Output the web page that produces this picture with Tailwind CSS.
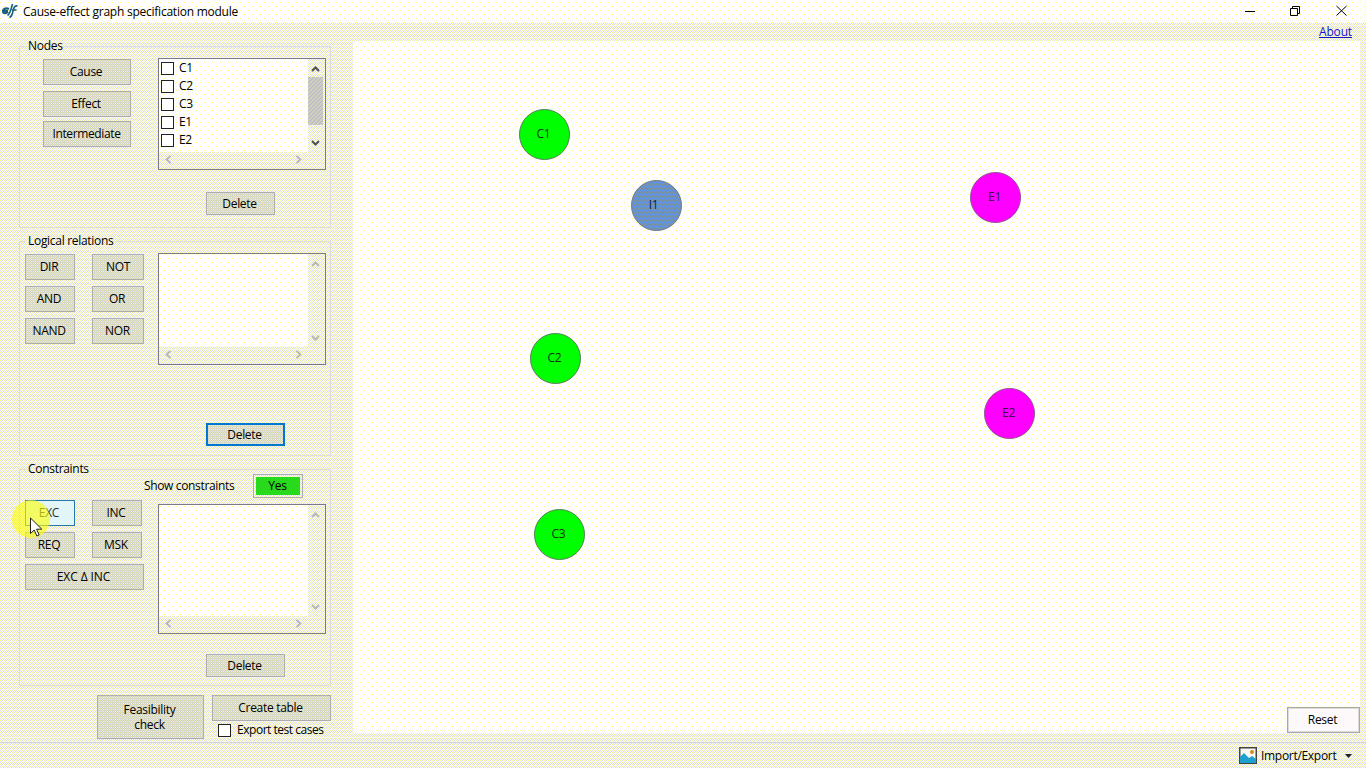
<!DOCTYPE html>
<html lang="en">
<head>
<meta charset="utf-8">
<title>Cause-effect graph specification module</title>
<script src="https://cdn.jsdelivr.net/npm/@tailwindcss/browser@4"></script>
<style>
  /* Dithered surface textures */
  :root {
    --panel: url("data:image/svg+xml,%3Csvg xmlns='http://www.w3.org/2000/svg' width='4' height='4' shape-rendering='crispEdges'%3E%3Cpath fill='%23fafafc' d='M0 0h4v4H0z'/%3E%3Cpath fill='%23f8f888' d='M0 0h1v1H0zM2 2h1v1H2zM1 1h1v1H1zM3 1h1v1H3z'/%3E%3Cpath fill='%23d8d8f4' d='M2 0h1v1H2zM0 2h1v1H0zM1 3h1v1H1zM3 3h1v1H3z'/%3E%3C/svg%3E");
    --btn: url("data:image/svg+xml,%3Csvg xmlns='http://www.w3.org/2000/svg' width='4' height='4' shape-rendering='crispEdges'%3E%3Cpath fill='%23d2d2cc' d='M0 0h4v4H0z'/%3E%3Cpath fill='%23e8e8a8' d='M0 0h1v1H0zM2 2h1v1H2z'/%3E%3Cpath fill='%23dcdcd8' d='M2 0h1v1H2zM0 2h1v1H0z'/%3E%3Cpath fill='%23ececec' d='M1 1h1v1H1zM3 1h1v1H3zM1 3h1v1H1zM3 3h1v1H3z'/%3E%3C/svg%3E");
    --thumb: url("data:image/svg+xml,%3Csvg xmlns='http://www.w3.org/2000/svg' width='4' height='4' shape-rendering='crispEdges'%3E%3Cpath fill='%23c6c6c4' d='M0 0h4v4H0z'/%3E%3Cpath fill='%23d8d8b8' d='M0 0h1v1H0zM3 1h1v1H3zM2 2h1v1H2zM1 3h1v1H1z'/%3E%3Cpath fill='%23bcbcc4' d='M2 0h1v1H2zM1 1h1v1H1zM0 2h1v1H0zM3 3h1v1H3z'/%3E%3C/svg%3E");
    --paper: url("data:image/svg+xml,%3Csvg xmlns='http://www.w3.org/2000/svg' width='8' height='8' shape-rendering='crispEdges'%3E%3Cpath fill='%23fdfdff' d='M0 0h8v8H0z'/%3E%3Cpath fill='%23ffff80' d='M0 2h1v1H0zM4 6h1v1H4z'/%3E%3C/svg%3E");
    --steel: url("data:image/svg+xml,%3Csvg xmlns='http://www.w3.org/2000/svg' width='4' height='4' shape-rendering='crispEdges'%3E%3Cpath fill='%235c92e4' d='M0 0h4v4H0z'/%3E%3Cpath fill='%237c94a4' d='M0 0h1v1H0zM2 0h1v1H2zM1 2h1v1H1zM3 2h1v1H3zM0 3h1v1H0zM2 1h1v1H2z'/%3E%3C/svg%3E");
  }
</style>
</head>
<body class="h-[768px] w-[1366px] overflow-hidden font-['Open_Sans',sans-serif] text-[12px] leading-4 tracking-[-0.3px] text-black **:bg-fixed">
<svg class="hidden">
  <symbol id="up" viewBox="0 0 9 6"><path d="M1 5 4.500 1.500 8 5" fill="none" stroke="currentColor" stroke-width="2"/></symbol>
  <symbol id="down" viewBox="0 0 9 6"><path d="M1 1 4.500 4.500 8 1" fill="none" stroke="currentColor" stroke-width="2"/></symbol>
  <symbol id="left" viewBox="0 0 6 9"><path d="M5.500 1 1.500 4.500 5.500 8" fill="none" stroke="currentColor" stroke-width="1.700"/></symbol>
  <symbol id="right" viewBox="0 0 6 9"><path d="M.5 1 4.500 4.500 .5 8" fill="none" stroke="currentColor" stroke-width="1.700"/></symbol>
</svg>
<div class="flex h-full flex-col bg-[image:var(--panel)]">
  <header class="flex h-[23px] shrink-0 items-center bg-[image:var(--paper)] pl-[2px]">
    <svg class="mb-[2px] h-[17px] w-[16px]" viewBox="0 0 16 17" fill="none" stroke="#17607f"><path d="M7 7C3 5.500 .8 7.500 1 9.500c.2 2.500 3.500 2 5 .3M1 9h5" stroke-width="2.200"/><path d="M10.500 2C9.500 6 8 12 5.500 13.500M15.500 4C12 3 11.500 7 10.500 11c-.7 2.500-1.500 4-3 4.500M10 8h4.500" stroke-width="1.600"/></svg>
    <h1 class="ml-[5px] mt-px whitespace-nowrap tracking-[-0.24px]">Cause-effect graph specification module</h1>
    <svg class="ml-auto mr-[19px] mb-[3px] h-[11px] w-[103px]" viewBox="0 0 103 11" fill="none" stroke="#000"><path d="M1 6.500h10M46.500 3.500h7v7h-7zM48.500 3.500v-2h7v7h-2M92.500 1l10 9.500M102.500 1l-10 9.500"/></svg>
  </header>

  <div class="flex h-[719px] shrink-0 items-start">
    <aside class="ml-[19px] mt-[15px] w-[312px] shrink-0">
      <fieldset class="h-[190px] border border-[#dcdcdc]">
        <legend class="ml-[6px] h-4 px-[2px]">Nodes</legend>
        <div class="flex items-start">
          <div class="ml-[23px] mt-[5px] flex w-[88px] flex-col">
            <button class="h-[26px] border border-[#adadad] bg-[image:var(--btn)] pr-[2px]">Cause</button>
            <button class="mt-[6px] h-[26px] border border-[#adadad] bg-[image:var(--btn)] pr-[2px]">Effect</button>
            <button class="mt-[4px] h-[26px] border border-[#adadad] bg-[image:var(--btn)] pr-px tracking-[-0.37px]">Intermediate</button>
          </div>
          <div class="ml-[27px] mt-[4px] grid h-[112px] w-[168px] grid-cols-[149px_1fr] grid-rows-[93px_1fr] border border-[#7a7b84]">
            <div class="flex flex-col bg-[image:var(--paper)] pl-[2px]">
              <label class="flex h-[18px] items-center"><i class="mt-px size-[13px] border border-[#222] bg-white"></i><span class="ml-[5px]">C1</span></label>
              <label class="flex h-[18px] items-center"><i class="mt-px size-[13px] border border-[#222] bg-white"></i><span class="ml-[5px]">C2</span></label>
              <label class="flex h-[18px] items-center"><i class="mt-px size-[13px] border border-[#222] bg-white"></i><span class="ml-[5px]">C3</span></label>
              <label class="flex h-[18px] items-center"><i class="mt-px size-[13px] border border-[#222] bg-white"></i><span class="ml-[5px]">E1</span></label>
              <label class="flex h-[18px] items-center"><i class="mt-px size-[13px] border border-[#222] bg-white"></i><span class="ml-[5px]">E2</span></label>
            </div>
            <div class="flex flex-col items-center pr-[2px] pt-[7px] text-[#505050]">
              <svg class="h-[6px] w-[9px]"><use href="#up"/></svg>
              <div class="mt-[5px] h-[48px] w-[15px] bg-[image:var(--thumb)]"></div>
              <svg class="mt-[15px] h-[6px] w-[9px] shrink-0"><use href="#down"/></svg>
            </div>
            <div class="flex justify-between pl-[6px] pr-[6px] pt-[3px] text-[#b4b4b8]"><svg class="h-[9px] w-[6px]"><use href="#left"/></svg><svg class="h-[9px] w-[6px]"><use href="#right"/></svg></div>
          </div>
        </div>
        <button class="ml-[186px] mt-[22px] block h-[23px] w-[69px] border border-[#adadad] bg-[image:var(--btn)] pr-[2px]">Delete</button>
      </fieldset>

      <fieldset class="mt-[5px] h-[223px] border border-[#dcdcdc]">
        <legend class="ml-[6px] h-4 px-[2px]">Logical relations</legend>
        <div class="flex items-start">
          <div class="ml-[5px] mt-[5px] grid grid-cols-[50px_52px] auto-rows-[26px] gap-x-[17px] gap-y-[6px]">
            <button class="border border-[#adadad] bg-[image:var(--btn)] pr-[2px]">DIR</button>
            <button class="border border-[#adadad] bg-[image:var(--btn)]">NOT</button>
            <button class="border border-[#adadad] bg-[image:var(--btn)] pr-[2px]">AND</button>
            <button class="border border-[#adadad] bg-[image:var(--btn)] pr-[2px]">OR</button>
            <button class="border border-[#adadad] bg-[image:var(--btn)] pr-[2px]">NAND</button>
            <button class="border border-[#adadad] bg-[image:var(--btn)] pr-px">NOR</button>
          </div>
          <div class="ml-[14px] mt-[4px] grid h-[112px] w-[168px] grid-cols-[149px_1fr] grid-rows-[93px_1fr] border border-[#7a7b84]">
            <div class="bg-[image:var(--paper)]"></div>
            <div class="flex flex-col items-center justify-between pb-[6px] pr-[2px] pt-[7px] text-[#b8b8b4]"><svg class="h-[6px] w-[9px]"><use href="#up"/></svg><svg class="h-[6px] w-[9px]"><use href="#down"/></svg></div>
            <div class="flex justify-between px-[6px] pt-[3px] text-[#b8b8a8]"><svg class="h-[9px] w-[6px]"><use href="#left"/></svg><svg class="h-[9px] w-[6px]"><use href="#right"/></svg></div>
          </div>
        </div>
        <button class="ml-[186px] mt-[58px] block h-[23px] w-[79px] border-2 border-[#0078d0] bg-[image:var(--btn)] pr-[2px] leading-[19px]">Delete</button>
      </fieldset>

      <fieldset class="mt-[5px] h-[225px] border border-[#dcdcdc]">
        <legend class="ml-[6px] h-4 px-[2px]">Constraints</legend>
        <div class="-mt-[3px] ml-[124px] flex h-[24px] items-center">
          <span class="w-[109px] whitespace-nowrap tracking-[-0.35px]">Show constraints</span>
          <button class="h-[24px] w-[50px] border border-[#adadad] bg-[image:var(--panel)] p-[2px]"><span class="block h-[18px] bg-[#28d91c] pr-px leading-[18px]">Yes</span></button>
        </div>
        <div class="flex items-start">
          <div class="relative ml-[5px] mt-[2px] grid w-[119px] grid-cols-[50px_50px] auto-rows-[26px] gap-x-[17px] gap-y-[6px]">
            <button class="border border-[#2478ac] bg-[#e2f5f8] pr-[2px] text-[#303030]">EXC</button>
            <button class="border border-[#adadad] bg-[image:var(--btn)] pr-[2px]">INC</button>
            <button class="z-10 border border-[#adadad] bg-[image:var(--btn)] pr-[2px]">REQ</button>
            <button class="border border-[#adadad] bg-[image:var(--btn)] pr-[2px]">MSK</button>
            <button class="col-span-2 w-[119px] border border-[#adadad] bg-[image:var(--btn)] pr-[2px] tracking-[-0.1px]">EXC Δ INC</button>
            <div class="absolute left-[-13px] top-0 z-20 size-[38px] rounded-full bg-[#ffff00]/60"></div>
            <svg class="absolute left-[5px] top-[17px] z-30 h-[20px] w-[13px]" viewBox="0 0 13 20"><path d="M.5 1v15.500l3.700-3.500 2.700 6 2.300-1-2.600-5.800h5.200z" fill="#fff" stroke="#222"/></svg>
          </div>
          <div class="ml-[14px] mt-[6px] grid h-[130px] w-[168px] grid-cols-[149px_1fr] grid-rows-[111px_1fr] border border-[#7a7b84]">
            <div class="bg-[image:var(--paper)]"></div>
            <div class="flex flex-col items-center justify-between pb-[6px] pr-[2px] pt-[7px] text-[#b8b8bc]"><svg class="h-[6px] w-[9px]"><use href="#up"/></svg><svg class="h-[6px] w-[9px]"><use href="#down"/></svg></div>
            <div class="flex justify-between px-[6px] pt-[3px] text-[#b4b4bc]"><svg class="h-[9px] w-[6px]"><use href="#left"/></svg><svg class="h-[9px] w-[6px]"><use href="#right"/></svg></div>
          </div>
        </div>
        <button class="ml-[186px] mt-[20px] block h-[23px] w-[79px] border border-[#adadad] bg-[image:var(--btn)] pr-[2px]">Delete</button>
      </fieldset>

      <div class="ml-[78px] mt-[9px] flex items-start gap-[8px]">
        <button class="h-[44px] w-[107px] border border-[#adadad] bg-[image:var(--btn)] pr-[2px] leading-[15px]">Feasibility<br>check</button>
        <div>
          <button class="block h-[26px] w-[119px] border border-[#adadad] bg-[image:var(--btn)] pr-[2px]">Create table</button>
          <label class="ml-[6px] mt-px flex items-center whitespace-nowrap"><i class="size-[13px] border border-[#222] bg-white"></i><span class="ml-[6px] tracking-[-0.47px]">Export test cases</span></label>
        </div>
      </div>
    </aside>

    <div class="ml-[22px] w-[1007px]">
      <div class="flex h-[18px] justify-end pr-[8px] pt-px"><a class="text-[#1414c8] underline underline-offset-1 tracking-[-0.15px]" href="#">About</a></div>
      <main class="relative h-[692px] bg-[image:var(--paper)]">
        <div class="absolute left-[166px] top-[68px] flex size-[51px] items-center justify-center rounded-full border border-[#508050] bg-[#00ff00] pb-px pr-[2px] text-[#103010]">C1</div>
        <div class="absolute left-[278px] top-[139px] flex size-[51px] items-center justify-center rounded-full border border-[#707880] bg-[image:var(--steel)] pb-px pr-[6px] text-[#102040]">I1</div>
        <div class="absolute left-[617px] top-[131px] flex size-[51px] items-center justify-center rounded-full border border-[#905090] bg-[#ff00ff] pb-px pr-[2px] text-[#401040]">E1</div>
        <div class="absolute left-[177px] top-[292px] flex size-[51px] items-center justify-center rounded-full border border-[#508050] bg-[#00ff00] pb-px pr-[2px] text-[#103010]">C2</div>
        <div class="absolute left-[631px] top-[347px] flex size-[51px] items-center justify-center rounded-full border border-[#905090] bg-[#ff00ff] pb-px pr-[2px] text-[#401040]">E2</div>
        <div class="absolute left-[181px] top-[468px] flex size-[51px] items-center justify-center rounded-full border border-[#508050] bg-[#00ff00] pb-px pr-[2px] text-[#103010]">C3</div>
        <button class="absolute bottom-0 right-0 h-[26px] w-[73px] border border-[#a8a8a8] bg-[#fdf9fa] pr-[2px] ring-1 ring-inset ring-[#dcdcdc]">Reset</button>
      </main>
    </div>
  </div>

  <footer class="flex flex-1 items-center border-t border-[#d5d5d5] pl-[1239px]">
    <svg class="h-[17px] w-[18px]" viewBox="0 0 18 17"><path d="M.75.75h16.500v15.500H.75z" fill="#f8f8f4" stroke="#444" stroke-width="1.500"/><circle cx="13" cy="5" r="2" fill="#d98b20"/><path d="M1 10l4-4 5 5 3-2 4 3v4H1z" fill="#20a0d0"/></svg>
    <span class="ml-[4px] w-[80px]">Import/Export</span>
    <svg class="ml-[4px] h-[4px] w-[7px]" viewBox="0 0 7 4"><path d="M0 0h7L3.500 4z" fill="#222"/></svg>
  </footer>
</div>
</body>
</html>
